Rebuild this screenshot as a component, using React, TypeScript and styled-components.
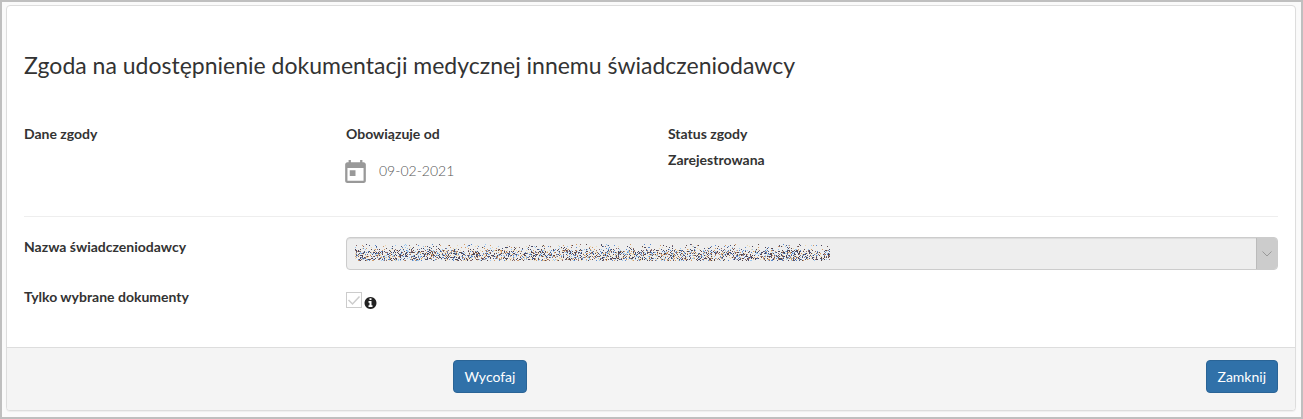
import React from "react";
import styled, { createGlobalStyle } from "styled-components";

const GlobalStyle = createGlobalStyle`
  *, *::before, *::after { box-sizing: border-box; }
  body {
    margin: 0;
    background: #fafafa;
    color: #333;
    font-family: Lato, "Open Sans", sans-serif;
    font-size: 14px;
    line-height: 20px;
  }
`;

const Frame = styled.div`
  min-height: 100vh;
  padding: 3px 5px 6px 4px;
  border: 2px solid #bfbfbf;
`;

const Panel = styled.form`
  border: 1px solid #ddd;
  border-radius: 4px;
  background: #fff;
  box-shadow: 0 1px 1px rgba(0, 0, 0, 0.05);
  overflow: hidden;
`;

const PanelBody = styled.div`
  padding: 46px 17px 39px;
`;

const Title = styled.h1`
  margin: 0 0 46px;
  font-size: 23px;
  line-height: 26px;
  font-weight: 400;
`;

const Row = styled.div`
  display: grid;
  grid-template-columns: repeat(4, minmax(0, 1fr));
  column-gap: 34px;
  align-items: start;
`;

const SummaryRow = styled(Row)`
  padding-bottom: 24px;
`;

const Stack = styled.div`
  display: flex;
  flex-direction: column;
  gap: 6px;
`;

const Label = styled.label`
  font-weight: 700;
`;

const Heading = styled.span`
  font-weight: 700;
`;

const DateValue = styled.div`
  display: flex;
  align-items: center;
  gap: 13px;
  height: 42px;
  margin-left: -1px;
  color: #555;
  font-weight: 300;
`;

const Divider = styled.hr`
  margin: 0 0 20px;
  border: 0;
  border-top: 1px solid #eee;
`;

const FieldRow = styled(Row)`
  margin-bottom: 17px;
`;

const WideField = styled.div`
  grid-column: 2 / -1;
`;

const SelectBox = styled.div`
  position: relative;
  display: flex;
  height: 33px;
  border: 1px solid #ccc;
  border-radius: 4px;
  background: #eee;
  box-shadow: inset 0 1px 1px rgba(0, 0, 0, 0.075);
  overflow: hidden;
`;

const Select = styled.select`
  flex: 1;
  min-width: 0;
  padding: 0 8px;
  border: 0;
  appearance: none;
  background: transparent;
  font: inherit;
`;

const RedactedText = styled.svg`
  position: absolute;
  left: 8px;
  top: 6px;
  pointer-events: none;
`;

const SelectArrow = styled.span`
  display: flex;
  align-items: center;
  justify-content: center;
  width: 21px;
  border-left: 1px solid #bbb;
  background: #ccc;
`;

const CheckField = styled.div`
  display: flex;
  align-items: flex-end;
  gap: 2px;
  padding-top: 5px;
`;

const CheckBox = styled.span`
  position: relative;
  width: 16px;
  height: 16px;
  svg {
    position: absolute;
    inset: 0;
    pointer-events: none;
  }
`;

const CheckInput = styled.input`
  display: block;
  width: 16px;
  height: 16px;
  margin: 0;
  appearance: none;
  border: 1px solid #ccc;
  background: #fff;
`;

const InfoIcon = styled.svg`
  margin-bottom: -1px;
`;

const PanelFooter = styled.footer`
  padding: 12px 17px 17px;
  border-top: 1px solid #ddd;
  background: #f4f4f4;
`;

const Button = styled.button<{ $column: number; $align: "center" | "end" }>`
  grid-column: ${(p) => p.$column};
  justify-self: ${(p) => p.$align};
  padding: 6px 11px;
  border: 1px solid #2a6496;
  border-radius: 4px;
  background: #3071a9;
  color: #fff;
  font: inherit;
  line-height: 19px;
`;

const WIDTH = 475;
const COLORS = ["#4a4258", "#5c4a4a", "#5c8acb", "#d19a68", "#9cc8ee", "#ecd9b0", "#4a5478", "#8a6a6a"];
const ROW_DENSITY = [0.04, 0.1, 0.11, 0.1, 0.11, 0.2, 0.34, 0.44, 0.46, 0.46, 0.46, 0.46, 0.46, 0.46, 0.5, 0.46, 0.38];

// Scattered one-pixel grains that hide the provider's name, one path per colour.
function buildGrains() {
  const paths = COLORS.map(() => "");
  let seed = 7341;
  const random = () => {
    seed = (seed * 16807) % 2147483647;
    return seed / 2147483647;
  };
  ROW_DENSITY.forEach((density, y) => {
    for (let x = 0; x < WIDTH; x++) {
      if (random() < density) {
        paths[Math.floor(random() * COLORS.length)] += `M${x} ${y}h1v1h-1z`;
      }
    }
  });
  return paths;
}

const grains = buildGrains();

export default function App() {
  return (
    <>
      <GlobalStyle />
      <Frame>
        <Panel>
          <PanelBody>
            <Title>Zgoda na udostępnienie dokumentacji medycznej innemu świadczeniodawcy</Title>
            <SummaryRow>
              <Heading>Dane zgody</Heading>
              <Stack>
                <Heading>Obowiązuje od</Heading>
                <DateValue>
                  <svg width="21" height="23" viewBox="3 1 18 20" fill="#999" aria-hidden="true">
                    <path d="M19 3h-1V1h-2v2H8V1H6v2H5c-1.11 0-1.99.9-1.99 2L3 19c0 1.1.89 2 2 2h14c1.1 0 2-.9 2-2V5c0-1.1-.9-2-2-2zm0 16H5V8h14v11zM7 10h5v5H7z" />
                  </svg>
                  <time dateTime="2021-02-09">09-02-2021</time>
                </DateValue>
              </Stack>
              <Stack>
                <Heading>Status zgody</Heading>
                <Heading>Zarejestrowana</Heading>
              </Stack>
            </SummaryRow>
            <Divider />
            <FieldRow>
              <Label htmlFor="provider">Nazwa świadczeniodawcy</Label>
              <WideField>
                <SelectBox>
                  <Select id="provider" disabled>
                    <option value="" />
                  </Select>
                  <RedactedText width={WIDTH} height="17" shapeRendering="crispEdges" aria-hidden="true">
                    {grains.map((d, i) => (
                      <path key={COLORS[i]} d={d} fill={COLORS[i]} />
                    ))}
                  </RedactedText>
                  <SelectArrow>
                    <svg width="10" height="6" viewBox="0 0 10 6" fill="none" stroke="#999" aria-hidden="true">
                      <path d="M.5.5 5 5 9.500.5" />
                    </svg>
                  </SelectArrow>
                </SelectBox>
              </WideField>
            </FieldRow>
            <Row>
              <Label htmlFor="selected-documents">Tylko wybrane dokumenty</Label>
              <CheckField>
                <CheckBox>
                  <CheckInput id="selected-documents" type="checkbox" defaultChecked disabled />
                  <svg width="16" height="16" viewBox="0 0 16 16" fill="none" stroke="#ccc" strokeWidth="1.5" aria-hidden="true">
                    <path d="m2.500 8 4 4 7-7.500" />
                  </svg>
                </CheckBox>
                <InfoIcon width="13" height="12" viewBox="0 128 1536 1536" fill="#222" aria-hidden="true">
                  <path d="M1024 1376v-160q0-14-9-23t-23-9h-96v-512q0-14-9-23t-23-9h-320q-14 0-23 9t-9 23v160q0 14 9 23t23 9h96v320h-96q-14 0-23 9t-9 23v160q0 14 9 23t23 9h448q14 0 23-9t9-23zm-128-896v-160q0-14-9-23t-23-9h-192q-14 0-23 9t-9 23v160q0 14 9 23t23 9h192q14 0 23-9t9-23zm640 416q0 209-103 385.500t-279.500 279.500-385.500 103-385.500-103-279.500-279.500-103-385.500 103-385.500 279.500-279.500 385.500-103 385.500 103 279.500 279.500 103 385.500z" />
                </InfoIcon>
              </CheckField>
            </Row>
          </PanelBody>
          <PanelFooter>
            <Row>
              <Button type="button" $column={2} $align="center">Wycofaj</Button>
              <Button type="button" $column={4} $align="end">Zamknij</Button>
            </Row>
          </PanelFooter>
        </Panel>
      </Frame>
    </>
  );
}
